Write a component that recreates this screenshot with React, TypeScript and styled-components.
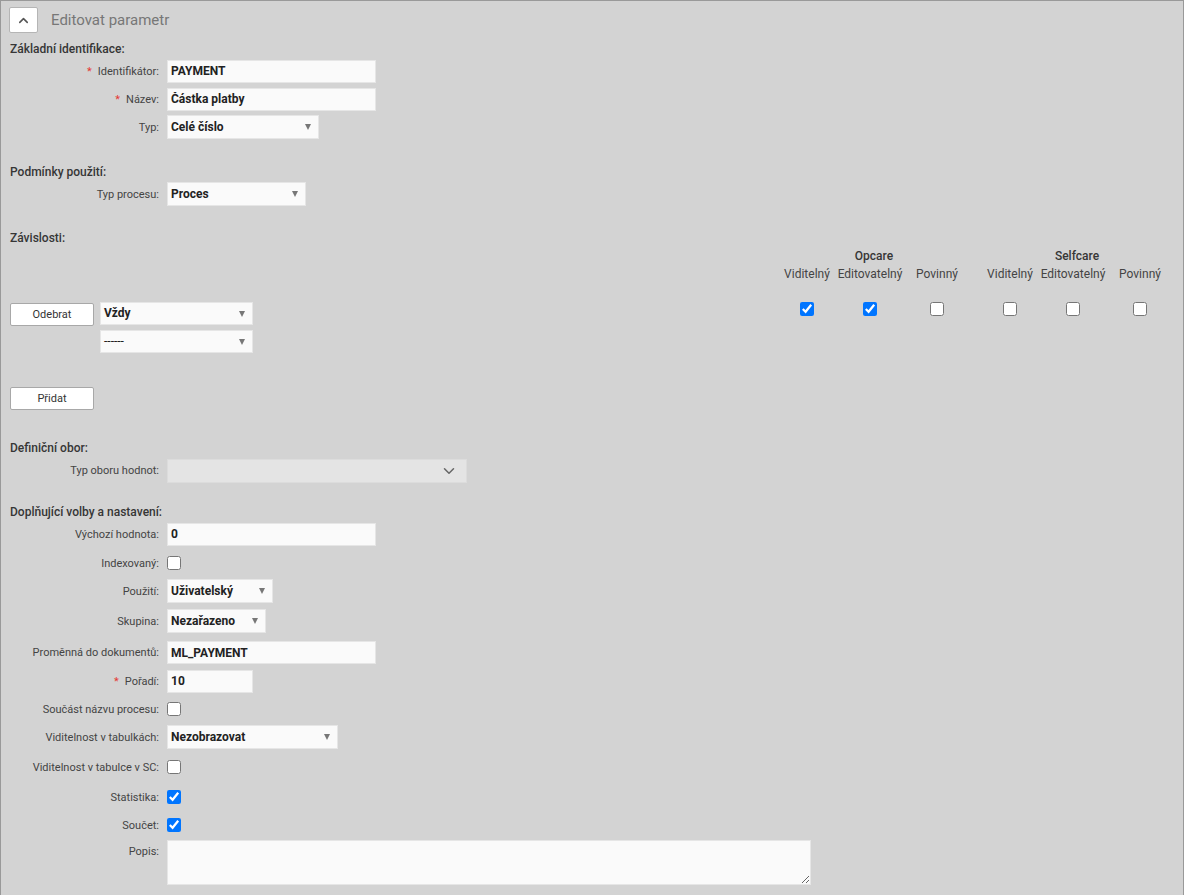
import React from 'react';
import styled, { createGlobalStyle } from 'styled-components';
import { ChevronUp, ChevronDown } from 'lucide-react';

const GlobalStyle = createGlobalStyle`
    html, body {
        margin: 0;
        padding: 0;
        background: #d3d3d3;
    }
    body {
        font-family: Roboto, 'Noto Sans', Arial, sans-serif;
        font-size: 12px;
        color: #333;
    }
`;

type Perm = [boolean, boolean, boolean, boolean, boolean, boolean];

const permColumns = ['Viditelný', 'Editovatelný', 'Povinný', 'Viditelný', 'Editovatelný', 'Povinný'];

const App: React.FC = () => {
    const perms: Perm = [true, true, false, false, false, false];

    return (
        <Page>
            <GlobalStyle />
            <Header>
                <ToggleButton>
                    <ChevronUp size={15} strokeWidth={2.5} />
                </ToggleButton>
                <PanelTitle>Editovat parametr</PanelTitle>
            </Header>

            <SectionTitle $top={8}>Základní identifikace:</SectionTitle>
            <Row>
                <Label $required>Identifikátor:</Label>
                <TextInput $width={209} defaultValue="PAYMENT" />
            </Row>
            <Row>
                <Label $required>Název:</Label>
                <TextInput $width={209} defaultValue="Částka platby" />
            </Row>
            <Row>
                <Label>Typ:</Label>
                <Select $width={152}>Celé číslo</Select>
            </Row>

            <SectionTitle $top={23}>Podmínky použití:</SectionTitle>
            <Row>
                <Label>Typ procesu:</Label>
                <Select $width={139}>Proces</Select>
            </Row>

            <SectionTitle $top={22}>Závislosti:</SectionTitle>
            <PermHeader>
                <GroupTitle $col={1}>Opcare</GroupTitle>
                <GroupTitle $col={5}>Selfcare</GroupTitle>
                {permColumns.map((name, i) => (
                    <ColTitle key={i} $col={i < 3 ? i + 1 : i + 2}>
                        {name}
                    </ColTitle>
                ))}
            </PermHeader>

            <DepRow>
                <ActionButton>Odebrat</ActionButton>
                <DepSelects>
                    <Select $width={153} $height={23}>
                        Vždy
                    </Select>
                    <Select $width={153} $height={23} $plain>
                        ------
                    </Select>
                </DepSelects>
                <PermGrid>
                    {perms.map((checked, i) => (
                        <PermCell key={i} $col={i < 3 ? i + 1 : i + 2}>
                            <Checkbox type="checkbox" defaultChecked={checked} />
                        </PermCell>
                    ))}
                </PermGrid>
            </DepRow>

            <AddRow>
                <ActionButton>Přidat</ActionButton>
            </AddRow>

            <SectionTitle $top={30}>Definiční obor:</SectionTitle>
            <Row>
                <Label>Typ oboru hodnot:</Label>
                <DisabledSelect>
                    <ChevronDown size={18} strokeWidth={2} />
                </DisabledSelect>
            </Row>

            <SectionTitle $top={20}>Doplňující volby a nastavení:</SectionTitle>
            <Row>
                <Label>Výchozí hodnota:</Label>
                <TextInput $width={209} defaultValue="0" />
            </Row>
            <Row $h={30}>
                <Label>Indexovaný:</Label>
                <Checkbox type="checkbox" />
            </Row>
            <Row $h={26}>
                <Label>Použití:</Label>
                <Select $width={106}>Uživatelský</Select>
            </Row>
            <Row $h={34}>
                <Label>Skupina:</Label>
                <Select $width={99}>Nezařazeno</Select>
            </Row>
            <Row $h={29}>
                <Label>Proměnná do dokumentů:</Label>
                <TextInput $width={209} defaultValue="ML_PAYMENT" />
            </Row>
            <Row>
                <Label $required>Pořadí:</Label>
                <TextInput $width={86} defaultValue="10" />
            </Row>
            <Row>
                <Label>Součást názvu procesu:</Label>
                <Checkbox type="checkbox" />
            </Row>
            <Row>
                <Label>Viditelnost v tabulkách:</Label>
                <Select $width={171}>Nezobrazovat</Select>
            </Row>
            <Row $h={32}>
                <Label>Viditelnost v tabulce v SC:</Label>
                <Checkbox type="checkbox" />
            </Row>
            <Row>
                <Label>Statistika:</Label>
                <Checkbox type="checkbox" defaultChecked />
            </Row>
            <Row>
                <Label>Součet:</Label>
                <Checkbox type="checkbox" defaultChecked />
            </Row>
            <TextRow>
                <Label $top>Popis:</Label>
                <TextArea />
            </TextRow>
        </Page>
    );
};

const Page = styled.div`
    min-height: 100vh;
    box-sizing: border-box;
    border: 1px solid #999;
    border-bottom: none;
    padding: 6px 12px 40px 8px;
    background: #d3d3d3;
`;

const Header = styled.div`
    display: flex;
    align-items: center;
    gap: 13px;
`;

const ToggleButton = styled.button`
    width: 29px;
    height: 26px;
    display: flex;
    align-items: center;
    justify-content: center;
    padding: 0;
    background: #fff;
    border: 1px solid #b5b5b5;
    border-radius: 2px;
    color: #555;
    cursor: pointer;
`;

const PanelTitle = styled.div`
    font-size: 15px;
    color: #777;
`;

const SectionTitle = styled.div<{ $top: number }>`
    margin-top: ${(p) => p.$top}px;
    padding-left: 1px;
    line-height: 16px;
    font-weight: 500;
    color: #363636;
`;

const Row = styled.div<{ $h?: number }>`
    display: grid;
    grid-template-columns: 150px 1fr;
    column-gap: 8px;
    align-items: center;
    justify-items: start;
    height: ${(p) => p.$h ?? 28}px;
`;

const TextRow = styled(Row)`
    align-items: start;
    height: auto;
    margin-top: 1px;
`;

const Label = styled.label<{ $required?: boolean; $top?: boolean }>`
    justify-self: end;
    font-size: 11px;
    color: #444;
    white-space: nowrap;
    padding-top: ${(p) => (p.$top ? '5px' : '0')};

    &::before {
        content: ${(p) => (p.$required ? "'*'" : 'none')};
        color: #e53935;
        margin-right: 6px;
    }
`;

const TextInput = styled.input<{ $width: number }>`
    box-sizing: border-box;
    width: ${(p) => p.$width}px;
    height: 23px;
    padding: 0 3px;
    background: #fafafa;
    border: 1px solid #e6e6e6;
    font-family: inherit;
    font-size: 12px;
    font-weight: 700;
    color: #222;
    outline: none;
`;

const Select = styled.div<{ $width: number; $height?: number; $plain?: boolean }>`
    position: relative;
    box-sizing: border-box;
    width: ${(p) => p.$width}px;
    height: ${(p) => p.$height ?? 24}px;
    line-height: ${(p) => (p.$height ?? 24) - 2}px;
    padding: 0 20px 0 3px;
    background: #fafafa;
    border: 1px solid #e6e6e6;
    font-weight: ${(p) => (p.$plain ? 400 : 700)};
    color: #222;

    &::after {
        content: '';
        position: absolute;
        right: 7px;
        top: 8px;
        border-left: 3.5px solid transparent;
        border-right: 3.5px solid transparent;
        border-top: 6px solid #777;
    }
`;

const DisabledSelect = styled.div`
    box-sizing: border-box;
    width: 300px;
    height: 24px;
    margin-top: 1px;
    display: flex;
    align-items: center;
    justify-content: flex-end;
    padding-right: 8px;
    background: #e4e4e4;
    border: 1px solid #dcdcdc;
    color: #666;
`;

const permGridColumns = '54px 72px 62px 15px 54px 72px 62px';

const PermHeader = styled.div`
    display: grid;
    grid-template-columns: ${permGridColumns};
    justify-content: end;
    row-gap: 2px;
    margin-top: 2px;
    line-height: 16px;
`;

const GroupTitle = styled.div<{ $col: number }>`
    grid-row: 1;
    grid-column: ${(p) => `${p.$col} / span 3`};
    text-align: center;
    font-weight: 500;
    color: #363636;
`;

const ColTitle = styled.div<{ $col: number }>`
    grid-row: 2;
    grid-column: ${(p) => p.$col};
    text-align: center;
    color: #444;
    white-space: nowrap;
`;

const DepRow = styled.div`
    display: flex;
    align-items: flex-start;
    margin-top: 20px;
    padding-left: 1px;
`;

const DepSelects = styled.div`
    display: flex;
    flex-direction: column;
    gap: 5px;
    margin-left: 6px;
`;

const PermGrid = styled.div`
    display: grid;
    grid-template-columns: ${permGridColumns};
    margin-left: auto;
`;

const PermCell = styled.div<{ $col: number }>`
    grid-column: ${(p) => p.$col};
    display: flex;
    justify-content: center;
`;

const ActionButton = styled.button`
    box-sizing: border-box;
    width: 84px;
    height: 23px;
    margin-top: 1px;
    background: #fff;
    border: 1px solid #a8a8a8;
    border-radius: 2px;
    font-family: inherit;
    font-size: 11px;
    color: #333;
    cursor: pointer;
`;

const AddRow = styled.div`
    margin-top: 33px;
    padding-left: 1px;
`;

const Checkbox = styled.input`
    width: 14px;
    height: 14px;
    margin: 0;
`;

const TextArea = styled.textarea`
    box-sizing: border-box;
    width: 644px;
    height: 45px;
    background: #fafafa;
    border: 1px solid #e6e6e6;
    font-family: inherit;
    font-size: 12px;
    outline: none;
`;

export default App;
